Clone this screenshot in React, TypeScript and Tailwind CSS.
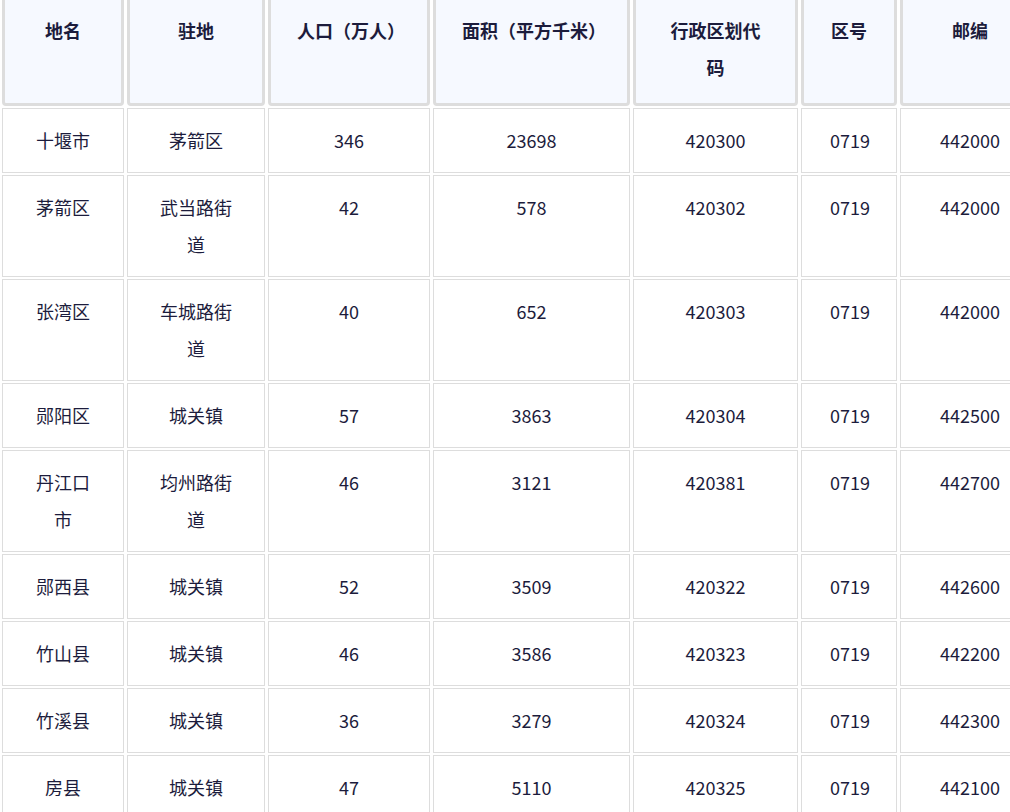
const head = ["地名","驻地","人口（万人）","面积（平方千米）","行政区划代码","区号","邮编"];
const widths = [122,138,162,197,165,96,140];
const rows = [
["十堰市","茅箭区","346","23698","420300","0719","442000"],
["茅箭区","武当路街道","42","578","420302","0719","442000"],
["张湾区","车城路街道","40","652","420303","0719","442000"],
["郧阳区","城关镇","57","3863","420304","0719","442500"],
["丹江口市","均州路街道","46","3121","420381","0719","442700"],
["郧西县","城关镇","52","3509","420322","0719","442600"],
["竹山县","城关镇","46","3586","420323","0719","442200"],
["竹溪县","城关镇","36","3279","420324","0719","442300"],
["房县","城关镇","47","5110","420325","0719","442100"],
];
export default function App() {
  return (
    <div className="w-[1010px] h-[812px] overflow-hidden bg-white" style={{fontFamily:'"Noto Sans CJK SC","Noto Sans",sans-serif'}}>
      <table className="border-separate [border-spacing:3px_2px] table-fixed w-[1044px] mt-[-6px] ml-[-1px] text-[18px] leading-[37px] text-[#1c1c3c]">
        <colgroup>
          {widths.map((w,i)=>(<col key={i} style={{width:w}} />))}
        </colgroup>
        <thead>
          <tr>
            {head.map((h,i)=>(
              <th key={i} className="border-[3px] border-[#dddddd] rounded-[4px] bg-[#f6f9ff] font-semibold align-top px-[26px] pt-[13px] pb-[17px] h-[104px] text-center">{h}</th>
            ))}
          </tr>
        </thead>
        <tbody>
          {rows.map((r,ri)=>(
            <tr key={ri}>
              {r.map((c,ci)=>(
                <td key={ci} className="border border-[#dddddd] align-top text-center px-[28px] pt-[13px] pb-[13px]">{c}</td>
              ))}
            </tr>
          ))}
        </tbody>
      </table>
    </div>
  );
}
